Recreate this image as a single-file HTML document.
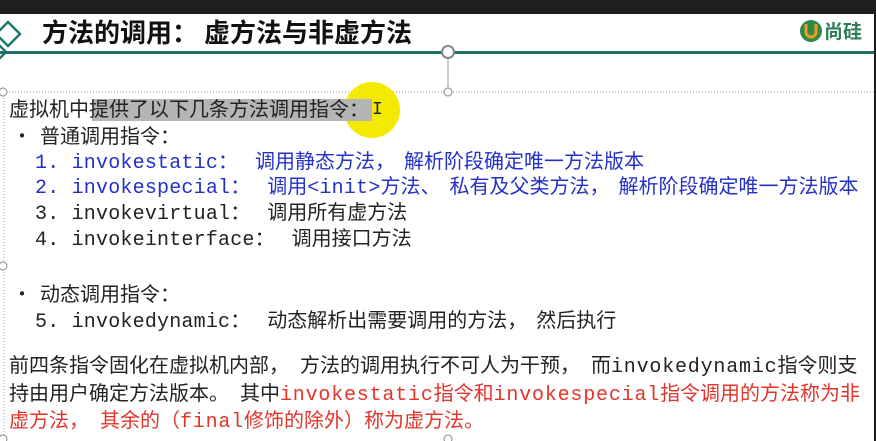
<!DOCTYPE html>
<html><head><meta charset="utf-8"><style>
body{margin:0;width:876px;height:441px;overflow:hidden;background:#fff;position:relative;font-family:"Noto Sans CJK SC","Liberation Sans",sans-serif;color:#222}
.t{position:absolute;white-space:nowrap;line-height:24px}
.m{font-family:"Liberation Mono",monospace;letter-spacing:0.2px}
.c{display:inline-block;width:1em;text-align:left}
.k{margin-right:17px}
.w{margin-right:9px}
.v{margin-right:11px}
.b{color:#2430c8}.r{color:#e3342a}
.l{font-size:20px;left:35px}
.p{font-size:20px;left:9px}
.p .m{letter-spacing:0.8px}
</style></head><body>
<div style="position:absolute;left:0;top:0;width:876px;height:14px;background:#1e1e1e"></div>
<div style="position:absolute;right:0;top:0;width:2px;height:441px;background:#1e1e1e"></div>
<svg style="position:absolute;left:0;top:14px" width="876" height="427">
<path d="M-4 20 L8 8 L20 20 L8 32 Z" fill="none" stroke="#1f7a6c" stroke-width="2.5"/>
<path d="M-4 28 L6 38 L-4 48" fill="none" stroke="#1f7a6c" stroke-width="2.5"/>
<rect x="0" y="37" width="874" height="3" fill="#1f6f64"/>
<line x1="0" y1="78" x2="874" y2="78" stroke="#999" stroke-dasharray="1,2"/>
<line x1="4" y1="78" x2="4" y2="427" stroke="#999" stroke-dasharray="1,2"/>
<line x1="448" y1="44" x2="448" y2="78" stroke="#999"/>
<circle cx="448" cy="38" r="6" fill="#fff" stroke="#888" stroke-width="2"/>
<circle cx="448" cy="78" r="4" fill="#fff" stroke="#888"/>
<circle cx="3" cy="78" r="4" fill="#fff" stroke="#888"/>
<circle cx="3" cy="252" r="4" fill="#fff" stroke="#888"/>
<circle cx="3" cy="425" r="4" fill="#fff" stroke="#888"/>
<circle cx="448" cy="425" r="4" fill="#fff" stroke="#888"/>
<circle cx="372" cy="96" r="28" fill="#f4ea00"/>
<circle cx="811" cy="17" r="11" fill="#2e8a48"/>
<path d="M806 10 v8 a5 5 0 0 0 10 0 v-8" fill="none" stroke="#f39a1e" stroke-width="3"/>
</svg>
<div class="t" style="left:42px;top:16px;font-size:26px;font-weight:bold;color:#111;line-height:32px">方法的调用<span class="c" style="margin-right:6px">：</span>虚方法与非虚方法</div>
<div class="t" style="left:824px;top:19px;font-size:19px;color:#2e7d5a;font-weight:bold">尚硅</div>
<div style="position:absolute;left:92px;top:99px;width:280px;height:22px;background:#b5b5b5"></div>
<div class="t" style="left:9px;top:96px;font-size:20px">虚拟机中提供了以下几条方法调用指令：</div>
<div class="t" style="left:372px;top:98px;font-size:18px;font-family:'Liberation Mono',monospace">I</div>
<div class="t" style="left:12px;top:123px;font-size:20px"><span style="display:inline-block;width:28px">•</span>普通调用指令：</div>
<div class="t l b" style="top:148px"><span class="m">1. invokestatic</span><span class="c k">：</span>调用静态方法<span class="c w">，</span>解析阶段确定唯一方法版本</div>
<div class="t l b" style="top:173px"><span class="m">2. invokespecial</span><span class="c k">：</span>调用<span class="m">&lt;init&gt;</span>方法<span class="c w">、</span>私有及父类方法<span class="c w">，</span>解析阶段确定唯一方法版本</div>
<div class="t l" style="top:199px"><span class="m">3. invokevirtual</span><span class="c k">：</span>调用所有虚方法</div>
<div class="t l" style="top:225px"><span class="m">4. invokeinterface</span><span class="c k">：</span>调用接口方法</div>
<div class="t" style="left:12px;top:281px;font-size:20px"><span style="display:inline-block;width:28px">•</span>动态调用指令：</div>
<div class="t l" style="top:307px"><span class="m">5. invokedynamic</span><span class="c k">：</span>动态解析出需要调用的方法<span class="c w">，</span>然后执行</div>
<div class="t p" style="top:352px">前四条指令固化在虚拟机内部<span class="c v">，</span>方法的调用执行不可人为干预<span class="c v">，</span>而<span class="m">invokedynamic</span>指令则支</div>
<div class="t p" style="top:380px">持由用户确定方法版本<span class="c v">。</span>其中<span class="r"><span class="m">invokestatic</span>指令和<span class="m">invokespecial</span>指令调用的方法称为非</span></div>
<div class="t p r" style="top:407px">虚方法<span class="c v">，</span>其余的<span class="c">（</span><span class="m">final</span>修饰的除外<span class="c">）</span>称为虚方法<span class="c">。</span></div>
</body></html>
